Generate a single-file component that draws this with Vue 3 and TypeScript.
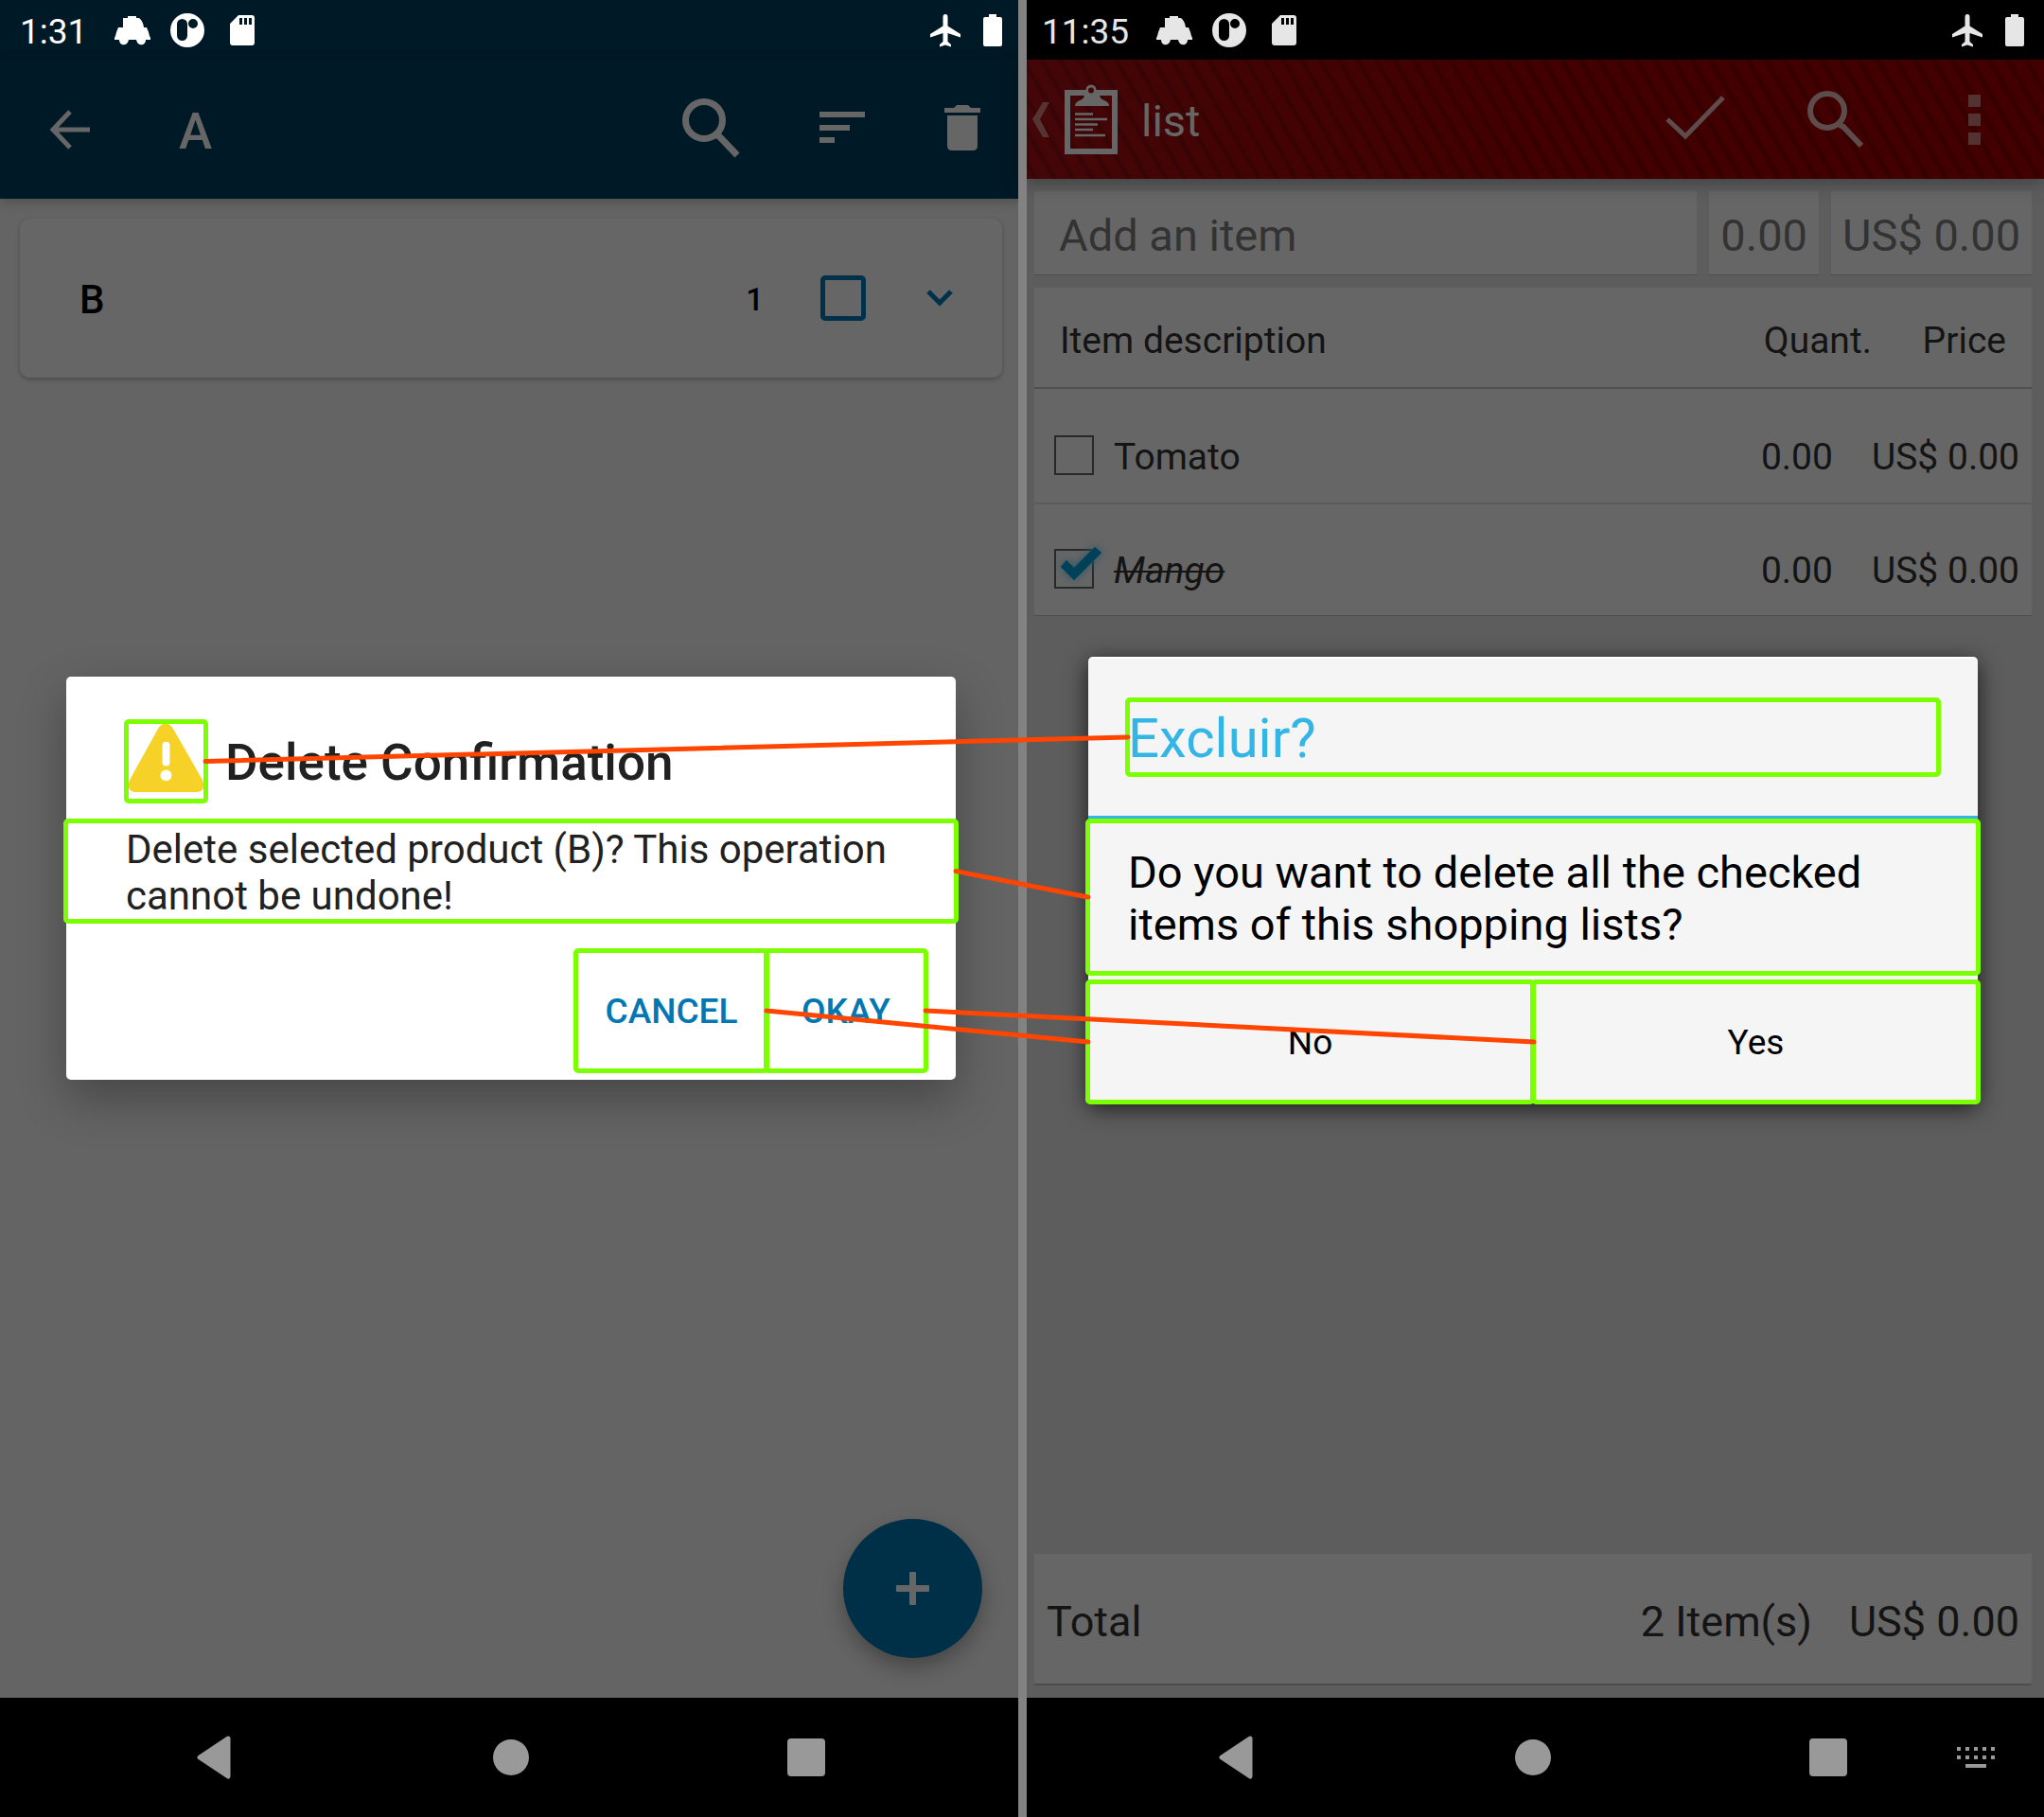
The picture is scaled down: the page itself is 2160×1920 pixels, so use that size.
<script setup lang="ts">
import { nextTick, onBeforeUnmount, onMounted, reactive, ref } from 'vue'

interface Line { x1: number; y1: number; x2: number; y2: number }
interface Item { id: number; name: string; quantity: string; price: string; done: boolean }

const items = reactive<Item[]>([
  { id: 1, name: 'Tomato', quantity: '0.00', price: 'US$ 0.00', done: false },
  { id: 2, name: 'Mango', quantity: '0.00', price: 'US$ 0.00', done: true },
])

const board = ref<HTMLElement | null>(null)
const lines = ref<Line[]>([])

// Matched elements share a key: data-from on the left screen, data-to on the right one.
const pairs = ['title', 'message', 'cancel', 'confirm']

function connect(): void {
  const root = board.value
  if (!root) return
  const origin = root.getBoundingClientRect()
  const found: Line[] = []
  for (const key of pairs) {
    const from = root.querySelector(`[data-from="${key}"]`)
    const to = root.querySelector(`[data-to="${key}"]`)
    if (!from || !to) continue
    const a = from.getBoundingClientRect()
    const b = to.getBoundingClientRect()
    found.push({
      x1: a.right - origin.left,
      y1: (a.top + a.bottom) / 2 - origin.top,
      x2: b.left - origin.left,
      y2: (b.top + b.bottom) / 2 - origin.top,
    })
  }
  lines.value = found
}

let observer: ResizeObserver | undefined
onMounted(async () => {
  await nextTick()
  connect()
  if (board.value) {
    observer = new ResizeObserver(connect)
    observer.observe(board.value)
  }
  document.fonts.ready.then(connect)
})
onBeforeUnmount(() => observer?.disconnect())
</script>

<template>
  <div ref="board" class="board">
    <section class="phone phone-blue" aria-label="Product list">
      <header class="status">
        <span class="clock">1:31</span>
        <svg class="note" viewBox="-29 -29 58 58" aria-hidden="true">
          <path fill="currentColor" d="M-5-15h9v2h3q4 3 5 10h3l2 5l1 4l1 2v2h-5c0 7-9 7-10 0h-8c-1 7-10 7-10 0h-5v-2l1-2l1-4l2-5h5v-10h5z" />
        </svg>
        <svg class="note" viewBox="-29 -29 58 58" aria-hidden="true">
          <path fill="currentColor" fill-rule="evenodd" d="M0-18a18 18 0 1 1 0 36a18 18 0 1 1 0-36zM-5.500-12a5.500 5.500 0 0 0-5.500 5.500v12a5.500 5.500 0 0 0 11 0v-12a5.500 5.500 0 0 0-5.500-5.500zM6-12a5 5 0 1 0 0 10a5 5 0 1 0 0-10z" />
        </svg>
        <svg class="note" viewBox="-29 -29 58 58" aria-hidden="true">
          <path fill="currentColor" fill-rule="evenodd" d="M-4-16h14q3 0 3 3v26q0 3-3 3h-20q-3 0-3-3v-20zM-3-13v7h3v-7zM2-13v7h3v-7zM7-13v7h3v-7z" />
        </svg>
        <span class="fill"></span>
        <svg class="system" viewBox="-25 -29 50 58" aria-hidden="true">
          <path fill="currentColor" d="M0-17q2.500 0 2.500 3v9.500l13.500 8.500v3.500l-13.500-4.500v9l3.500 3v2.500l-6-2l-6 2v-2.500l3.500-3v-9l-13.500 4.500v-3.500l13.500-8.500v-9.500q0-3 2.500-3z" />
        </svg>
        <svg class="system" viewBox="-25 -29 50 58" aria-hidden="true">
          <path fill="currentColor" d="M-4-17h8v3h4q2 0 2 2v27q0 2-2 2h-16q-2 0-2-2v-27q0-2 2-2h4z" />
        </svg>
      </header>

      <div class="bar bar-blue">
        <button class="act wide" aria-label="Back">
          <svg width="44" height="44" viewBox="0 0 44 44"><path d="M43 22H5M22 3L4 22L22 41" fill="none" stroke="currentColor" stroke-width="5" /></svg>
        </button>
        <h1 class="name">A</h1>
        <button class="act wide raised" aria-label="Search">
          <svg width="66" height="66" viewBox="0 0 66 66"><circle cx="24" cy="25" r="19.500" fill="none" stroke="currentColor" stroke-width="7" /><path d="M37 41L40 42L59 62" fill="none" stroke="currentColor" stroke-width="7" /></svg>
        </button>
        <button class="act raised" aria-label="Sort">
          <svg width="48" height="34" viewBox="0 0 48 34"><path d="M0 0h48v6H0zM0 14h32v6H0zM0 27h16v6H0z" fill="currentColor" /></svg>
        </button>
        <button class="act raised" aria-label="Delete">
          <svg width="38" height="48" viewBox="0 0 38 48"><path d="M0 3h10l3-3h12l3 3h10v5H0zM3 11h32v32q0 5-5 5H8q-5 0-5-5z" fill="currentColor" /></svg>
        </button>
      </div>

      <main class="content products">
        <article class="product">
          <span class="product-name">B</span>
          <span class="product-count">1</span>
          <input class="tick" type="checkbox" aria-label="B bought" />
          <button class="expand" aria-label="Expand B">
            <svg width="28" height="18" viewBox="0 0 28 18"><path d="M2 2L14 14L26 2" fill="none" stroke="currentColor" stroke-width="5" /></svg>
          </button>
        </article>
        <button class="fab" aria-label="Add product">
          <svg width="35" height="35" viewBox="0 0 35 35"><path d="M15 0h5q1 0 1 1v13h13q1 0 1 1v5q0 1-1 1H21v13q0 1-1 1h-5q-1 0-1-1V21H1q-1 0-1-1v-5q0-1 1-1h13V1q0-1 1-1z" fill="currentColor" /></svg>
        </button>
      </main>

      <div class="layer">
        <div class="dialog confirm" role="dialog" aria-labelledby="confirm-title">
          <div class="confirm-head">
            <span class="warn mark" data-from="title">
              <svg width="83" height="83" viewBox="0 0 84 84" aria-hidden="true">
                <path d="M34 6q7-9 15 0L81 62q4 11-5 13H8q-9-2-5-13z" fill="#f6d228" />
                <rect x="38" y="21" width="8" height="26" rx="4" fill="#fff" />
                <circle cx="42" cy="57" r="6" fill="#fff" />
              </svg>
            </span>
            <h2 id="confirm-title" class="confirm-title">Delete Confirmation</h2>
          </div>
          <p class="confirm-text mark" data-from="message">Delete selected product (B)? This operation cannot be undone!</p>
          <div class="confirm-actions">
            <button class="flat mark" data-from="cancel">CANCEL</button>
            <button class="flat okay mark" data-from="confirm">OKAY</button>
          </div>
        </div>
      </div>

      <nav class="nav">
        <button class="key key-back" aria-label="Back"><svg width="40" height="46" viewBox="0 0 40 46"><path d="M33 3L3 23L33 43z" fill="currentColor" stroke="currentColor" stroke-width="5" stroke-linejoin="round" /></svg></button>
        <button class="key" aria-label="Home"><svg width="40" height="40" viewBox="0 0 40 40"><circle cx="20" cy="20" r="19" fill="currentColor" /></svg></button>
        <button class="key" aria-label="Overview"><svg width="40" height="40" viewBox="0 0 40 40"><rect width="40" height="40" rx="4" fill="currentColor" /></svg></button>
      </nav>
    </section>

    <section class="phone phone-red" aria-label="Shopping list">
      <header class="status">
        <span class="clock">11:35</span>
        <svg class="note" viewBox="-29 -29 58 58" aria-hidden="true">
          <path fill="currentColor" d="M-5-15h9v2h3q4 3 5 10h3l2 5l1 4l1 2v2h-5c0 7-9 7-10 0h-8c-1 7-10 7-10 0h-5v-2l1-2l1-4l2-5h5v-10h5z" />
        </svg>
        <svg class="note" viewBox="-29 -29 58 58" aria-hidden="true">
          <path fill="currentColor" fill-rule="evenodd" d="M0-18a18 18 0 1 1 0 36a18 18 0 1 1 0-36zM-5.500-12a5.500 5.500 0 0 0-5.500 5.500v12a5.500 5.500 0 0 0 11 0v-12a5.500 5.500 0 0 0-5.500-5.500zM6-12a5 5 0 1 0 0 10a5 5 0 1 0 0-10z" />
        </svg>
        <svg class="note" viewBox="-29 -29 58 58" aria-hidden="true">
          <path fill="currentColor" fill-rule="evenodd" d="M-4-16h14q3 0 3 3v26q0 3-3 3h-20q-3 0-3-3v-20zM-3-13v7h3v-7zM2-13v7h3v-7zM7-13v7h3v-7z" />
        </svg>
        <span class="fill"></span>
        <svg class="system" viewBox="-25 -29 50 58" aria-hidden="true">
          <path fill="currentColor" d="M0-17q2.500 0 2.500 3v9.500l13.500 8.500v3.500l-13.500-4.500v9l3.500 3v2.500l-6-2l-6 2v-2.500l3.500-3v-9l-13.500 4.500v-3.500l13.500-8.500v-9.500q0-3 2.500-3z" />
        </svg>
        <svg class="system" viewBox="-25 -29 50 58" aria-hidden="true">
          <path fill="currentColor" d="M-4-17h8v3h4q2 0 2 2v27q0 2-2 2h-16q-2 0-2-2v-27q0-2 2-2h4z" />
        </svg>
      </header>

      <div class="bar bar-red">
        <button class="home" aria-label="Navigate up">
          <svg width="116" height="126" viewBox="0 0 116 126">
            <path d="M29 45h-7L11 63l11 19h7L19 63z" fill="#573434" />
            <path fill="#666" fill-rule="evenodd" d="M45 32H67.500a5.500 5.500 0 0 1 11 0H101V100H45zM51 38V94H95V38H82q1 4 5 5q5 2 5 6H56q0-4 5-6q4-1 5-5zM73 29.500a3 3 0 1 0 0 6a3 3 0 1 0 0-6z" />
            <path d="M56 57.500h19M56 63h34M56 68.500h24M56 74h19M56 80h32" stroke="#666" stroke-width="2.500" fill="none" />
          </svg>
        </button>
        <h1 class="list-name">list</h1>
        <button class="act wide" aria-label="Check all">
          <svg width="66" height="50" viewBox="0 0 66 50" class="soft"><path d="M2 25L21 43L61 2" fill="none" stroke="currentColor" stroke-width="5" /></svg>
        </button>
        <button class="act wide" aria-label="Search">
          <svg width="62" height="62" viewBox="0 0 62 62" class="soft"><circle cx="22" cy="22" r="18" fill="none" stroke="currentColor" stroke-width="6" /><path d="M35 37L39 39L58 59" fill="none" stroke="currentColor" stroke-width="6" /></svg>
        </button>
        <button class="act wide" aria-label="More options">
          <svg width="14" height="53" viewBox="0 0 14 53"><path d="M0 0h13v13H0zM0 20h13v13H0zM0 40h13v13H0z" fill="#533232" /></svg>
        </button>
      </div>

      <main class="content shopping">
        <form class="entry" @submit.prevent>
          <input class="field grow" type="text" placeholder="Add an item" aria-label="Item" />
          <input class="field quantity" type="text" placeholder="0.00" aria-label="Quantity" />
          <input class="field price" type="text" placeholder="US$ 0.00" aria-label="Price" />
        </form>

        <table class="items">
          <thead>
            <tr><th>Item description</th><th>Quant.</th><th>Price</th></tr>
          </thead>
          <tbody>
            <tr v-for="item in items" :key="item.id">
              <td>
                <label class="entry-label" :class="{ done: item.done }">
                  <span class="box">
                    <input v-model="item.done" type="checkbox" />
                    <svg v-if="item.done" class="check" width="54" height="50" viewBox="0 0 54 50" aria-hidden="true">
                      <path d="M7 27L13 20L21 28L43 6L50 12L21 41z" fill="#00415a" stroke="#1c4a5a" stroke-width="1" />
                    </svg>
                  </span>
                  <span class="entry-name">{{ item.name }}</span>
                </label>
              </td>
              <td>{{ item.quantity }}</td>
              <td>{{ item.price }}</td>
            </tr>
          </tbody>
        </table>

        <footer class="total">
          <span class="grow">Total</span>
          <span>2 Item(s)</span>
          <span>US$ 0.00</span>
        </footer>
      </main>

      <div class="layer">
        <div class="dialog exclude" role="dialog" aria-labelledby="exclude-title">
          <div class="exclude-head">
            <h2 id="exclude-title" class="exclude-title mark" data-to="title">Excluir?</h2>
          </div>
          <p class="exclude-text mark" data-to="message">Do you want to delete all the checked items of this shopping lists?</p>
          <div class="exclude-actions">
            <button class="half mark" data-to="cancel">No</button>
            <button class="half mark" data-to="confirm">Yes</button>
          </div>
        </div>
      </div>

      <nav class="nav">
        <button class="key key-back" aria-label="Back"><svg width="40" height="46" viewBox="0 0 40 46"><path d="M33 3L3 23L33 43z" fill="currentColor" stroke="currentColor" stroke-width="5" stroke-linejoin="round" /></svg></button>
        <button class="key" aria-label="Home"><svg width="40" height="40" viewBox="0 0 40 40"><circle cx="20" cy="20" r="19" fill="currentColor" /></svg></button>
        <button class="key" aria-label="Overview"><svg width="40" height="40" viewBox="0 0 40 40"><rect width="40" height="40" rx="4" fill="currentColor" /></svg></button>
        <button class="key" aria-label="Switch keyboard">
          <svg width="40" height="22" viewBox="0 0 40 22"><path d="M0 0h4v4H0zM9 0h4v4H9zM18 0h4v4h-4zM27 0h4v4h-4zM36 0h4v4h-4zM0 9h4v4H0zM9 9h4v4H9zM18 9h4v4h-4zM27 9h4v4h-4zM36 9h4v4h-4zM9 18h22v4H9z" fill="currentColor" /></svg>
        </button>
      </nav>
    </section>

    <div class="seam"></div>
    <svg class="links" aria-hidden="true">
      <line v-for="(l, i) in lines" :key="i" :x1="l.x1" :y1="l.y1" :x2="l.x2" :y2="l.y2" />
    </svg>
  </div>
</template>

<style>
body {
  margin: 0;
  background: #000;
}
</style>

<style scoped>
.board {
  position: relative;
  display: grid;
  grid-template-columns: 1fr 1fr;
  min-height: 100vh;
  font-family: Roboto, "Liberation Sans", sans-serif;
}
.board *,
.board *::before {
  box-sizing: border-box;
}
h1, h2, p {
  margin: 0;
  font-weight: 400;
}
button {
  margin: 0;
  padding: 0;
  border: 0;
  background: none;
  color: inherit;
  font: inherit;
}
svg {
  display: block;
}
.phone {
  position: relative;
  display: flex;
  flex-direction: column;
  min-width: 0;
}
.fill, .grow {
  flex: 1;
}

/* Status bar */
.status {
  display: flex;
  align-items: center;
  height: 63px;
  padding: 0 6px 0 21px;
  color: #fff;
}
.phone-blue .status {
  background: #001926;
}
.phone-red .status {
  background: #000;
  color: #e6e6e6;
}
.clock {
  padding-top: 4px;
  margin-right: 19px;
  font-size: 37px;
  line-height: 59px;
}
.note {
  width: 58px;
  height: 58px;
}
.system {
  width: 50px;
  height: 58px;
}

/* App bars */
.bar {
  display: flex;
  align-items: center;
  color: #666;
}
.bar-blue {
  position: relative;
  height: 147px;
  background: #001926;
  box-shadow: 0 2px 12px rgba(0, 0, 0, 0.25);
}
.bar-red {
  position: relative;
  z-index: 1;
  height: 126px;
  background:
    repeating-linear-gradient(60deg, rgba(0, 0, 0, 0) 0 9px, rgba(0, 0, 0, 0.17) 12px 14px, rgba(0, 0, 0, 0) 17px),
    linear-gradient(90deg, #440608, #420000 50%);
  box-shadow: 0 3px 20px rgba(0, 0, 0, 0.35);
}
.act {
  display: flex;
  align-items: center;
  justify-content: center;
  width: 127px;
  height: 100%;
}
.act.wide {
  width: 147px;
}
.act.raised {
  padding-bottom: 3px;
}
.name {
  flex: 1;
  margin-left: 42px;
  padding-top: 5px;
  font-size: 53px;
  font-weight: 500;
  line-height: 62px;
}
.list-name {
  flex: 1;
  margin-left: 10px;
  padding-top: 3px;
  font-size: 47px;
  line-height: 56px;
}
.soft {
  color: #5e4c4c;
}

/* Left screen */
.content {
  display: flex;
  flex-direction: column;
  flex: 1;
}
.products {
  padding: 21px;
  background: #646464;
}
.product {
  display: flex;
  align-items: center;
  height: 168px;
  padding-left: 63px;
  border-radius: 10px;
  background: #666;
  box-shadow: 0 2px 5px rgba(0, 0, 0, 0.25);
  color: #000;
  font-weight: 500;
}
.product-name {
  flex: 1;
  padding-top: 2px;
  font-size: 42px;
}
.product-count {
  margin-right: 60px;
  padding-top: 2px;
  font-size: 33px;
}
.tick {
  appearance: none;
  width: 48px;
  height: 48px;
  margin: 0;
  border: 5px solid #00304a;
  border-radius: 5px;
}
.expand {
  display: flex;
  align-items: center;
  justify-content: center;
  width: 132px;
  height: 126px;
  margin-left: 12px;
  color: #00304a;
}
.fab {
  display: flex;
  align-items: center;
  justify-content: center;
  align-self: flex-end;
  width: 147px;
  height: 147px;
  margin: auto 21px 21px 0;
  border-radius: 50%;
  background: #002f48;
  box-shadow: 0 10px 22px rgba(0, 0, 0, 0.3);
  color: #666;
}

/* Right screen */
.shopping {
  padding: 13px;
  background: #5d5d5d;
}
.entry {
  display: flex;
  gap: 13px;
  margin-bottom: 13px;
}
.field {
  min-width: 0;
  height: 89px;
  margin: 0;
  padding: 4px 12px 0;
  border: 0;
  border-bottom: 1px solid #4d4d4d;
  border-radius: 0;
  background: #666;
  color: #141414;
  font-family: inherit;
  font-size: 47px;
  text-align: right;
}
.field::placeholder {
  color: #333;
  opacity: 1;
}
.field.grow {
  padding-left: 26px;
  text-align: left;
}
.quantity {
  width: 116px;
}
.price {
  width: 212px;
}
.items {
  width: 100%;
  border-collapse: separate;
  border-spacing: 0;
  border-bottom: 1px solid #4d4d4d;
  background: #666;
  color: #141414;
  font-size: 39px;
  line-height: 47px;
  white-space: nowrap;
}
th, td {
  padding: 0;
  font-weight: 400;
  text-align: right;
}
th {
  height: 107px;
  padding-top: 8px;
  border-bottom: 2px solid #505050;
}
th:first-child, td:first-child {
  text-align: left;
}
th:first-child {
  padding-left: 27px;
}
th:last-child {
  width: 166px;
  padding-right: 27px;
}
td {
  height: 117px;
  padding-top: 24px;
}
tr:first-child td {
  height: 122px;
  border-bottom: 2px solid #5b5b5b;
}
td:nth-child(2) {
  padding-right: 41px;
}
td:last-child {
  padding-right: 13px;
}
.entry-label {
  display: flex;
  align-items: center;
  gap: 21px;
  padding-left: 21px;
}
.box {
  position: relative;
  margin-bottom: 5px;
}
.box input {
  display: block;
  appearance: none;
  width: 42px;
  height: 42px;
  margin: 0;
  border: 2px solid #292929;
}
.check {
  position: absolute;
  left: 0;
  bottom: 0;
  filter: drop-shadow(0 0 5px #2a5666);
}
.done .entry-name {
  font-style: italic;
  text-decoration: line-through;
  text-decoration-thickness: 2px;
}
.total {
  display: flex;
  align-items: center;
  gap: 39px;
  height: 139px;
  margin-top: auto;
  padding: 5px 13px 0;
  border-bottom: 2px solid #4d4d4d;
  background: #666;
  color: #141414;
  font-size: 45px;
}

/* Dialogs */
.layer {
  position: absolute;
  z-index: 2;
  inset: 63px 0 127px;
  display: flex;
  align-items: center;
  padding: 0 70px;
}
.phone-red .layer {
  inset: 64px 0 126px;
}
.dialog {
  width: 100%;
  border-radius: 5px;
}
.mark {
  border-radius: 2px;
  outline: 5px solid #7cff00;
  outline-offset: -2px;
}
.confirm {
  padding-bottom: 10px;
  background: #fff;
  box-shadow: 0 20px 50px rgba(0, 0, 0, 0.3);
  color: #212121;
}
.confirm-head {
  display: flex;
  align-items: center;
  gap: 21px;
  padding: 48px 64px 22px;
}
.confirm-title {
  padding-top: 3px;
  font-size: 53px;
  font-weight: 500;
  line-height: 62px;
}
.confirm-text {
  padding: 5px 63px 2px;
  font-size: 42px;
  line-height: 49px;
}
.confirm-actions {
  display: flex;
  justify-content: flex-end;
  padding: 32px 32px 0;
}
.flat {
  width: 201px;
  height: 126px;
  color: #0277b3;
  font-size: 37px;
  font-weight: 500;
}
.okay {
  width: 168px;
}
.exclude {
  background: #f5f5f5;
  border-top: 2px solid #fff;
  box-shadow: 0 6px 24px rgba(0, 0, 0, 0.75);
  color: #000;
}
.exclude-head {
  margin-bottom: 2px;
  padding: 44px 42px;
  border-bottom: 4px solid #33b5e5;
}
.exclude-title {
  padding-top: 2px;
  color: #33b5e5;
  font-size: 58px;
  line-height: 76px;
}
.exclude-text {
  padding: 26px 42px 24px;
  font-size: 47px;
  line-height: 55px;
}
.exclude-actions {
  display: flex;
  gap: 2px;
  padding-top: 10px;
}
.half {
  flex: 1;
  height: 126px;
  font-size: 37px;
}

/* System navigation */
.nav {
  display: grid;
  grid-template-columns: 3fr 10fr 16fr 10fr 3fr;
  height: 126px;
  padding: 0 36px;
  background: #000;
  color: #999;
}
.key {
  display: flex;
  align-items: center;
  justify-content: center;
}
.key-back {
  grid-column: 2;
}

/* Comparison overlay */
.seam {
  position: absolute;
  z-index: 1;
  top: 0;
  bottom: 0;
  left: calc(50% - 4px);
  width: 9px;
  background: #828282;
}
.links {
  position: absolute;
  z-index: 3;
  inset: 0;
  width: 100%;
  height: 100%;
  pointer-events: none;
}
.links line {
  stroke: #ff4500;
  stroke-width: 5px;
  stroke-linecap: round;
}
</style>
